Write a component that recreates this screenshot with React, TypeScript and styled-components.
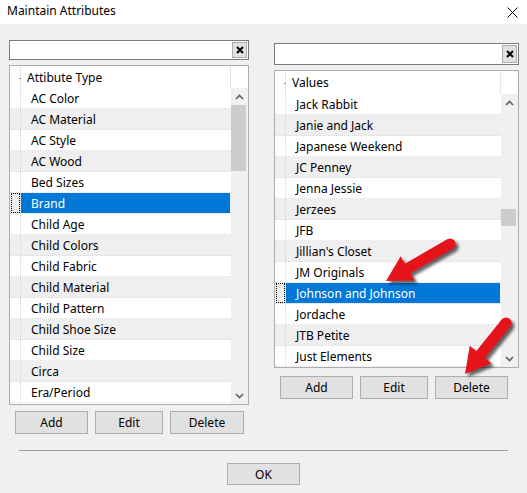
import React from "react";
import styled, { createGlobalStyle } from "styled-components";

const GlobalStyle = createGlobalStyle`
  html, body {
    margin: 0;
    padding: 0;
  }
  body {
    font-family: "Noto Sans", "Segoe UI", sans-serif;
    font-size: 12px;
    color: #000;
  }
`;

const Window = styled.div`
  position: relative;
  width: 527px;
  height: 493px;
  background: #f0f0f0;
  overflow: hidden;
  display: flex;
  flex-direction: column;
`;

const TitleBar = styled.div`
  height: 24px;
  flex-shrink: 0;
  background: #fff;
  display: flex;
  align-items: center;
  justify-content: space-between;
  padding: 0 9px 0 7px;
  box-sizing: border-box;
`;

const Title = styled.span`
  font-size: 12px;
  line-height: 1;
  margin-top: -3px;
`;

const Content = styled.div`
  display: flex;
  align-items: flex-start;
  padding-left: 9px;
`;

const Panel = styled.div<{ $top: number; $left: number; $width: number }>`
  display: flex;
  flex-direction: column;
  margin-top: ${(p) => p.$top}px;
  margin-left: ${(p) => p.$left}px;
  width: ${(p) => p.$width}px;
`;

const SearchBox = styled.div<{ $h: number }>`
  height: ${(p) => p.$h}px;
  box-sizing: border-box;
  border: 1px solid #7a7a7a;
  background: #fff;
  display: flex;
  justify-content: flex-end;
  padding: 1px;
`;

const ClearButton = styled.div`
  width: 15px;
  height: 100%;
  box-sizing: border-box;
  border: 1px solid #adadad;
  background: #e1e1e1;
  display: flex;
  align-items: center;
  justify-content: center;
`;

const ListBox = styled.div<{ $h: number }>`
  margin-top: 5px;
  height: ${(p) => p.$h}px;
  box-sizing: border-box;
  border: 1px solid #abadb3;
  background: #fff;
  display: flex;
  flex-direction: column;
  overflow: hidden;
`;

const Header = styled.div<{ $h: number }>`
  height: ${(p) => p.$h}px;
  flex-shrink: 0;
  display: flex;
`;

const HeaderGrip = styled.div`
  width: 10px;
  border-right: 1px solid #e5e5e5;
  position: relative;
  &::after {
    content: "";
    position: absolute;
    right: -1px;
    top: 12px;
    width: 2px;
    height: 1px;
    background: #8a8a8a;
  }
`;

const HeaderLabel = styled.div`
  flex: 1;
  padding-left: 6px;
  display: flex;
  align-items: center;
  border-right: 1px solid #e5e5e5;
  font-size: 12px;
`;

const HeaderCorner = styled.div`
  width: 17px;
`;

const ListBody = styled.div`
  flex: 1;
  display: flex;
  min-height: 0;
`;

const Rows = styled.div`
  flex: 1;
  overflow: hidden;
`;

const Row = styled.div<{ $alt: boolean }>`
  height: 21px;
  box-sizing: border-box;
  display: flex;
  background: ${(p) => (p.$alt ? "#efefef" : "#fff")};
  border-bottom: 1px dotted #dedede;
`;

const RowGrip = styled.div`
  width: 10px;
  flex-shrink: 0;
  border-right: 1px dotted #d6d6d6;
  position: relative;
`;

const FocusMark = styled.div`
  position: absolute;
  left: 1px;
  right: 0;
  top: 0;
  bottom: 0;
  border: 1px dotted #000;
`;

const Cell = styled.div<{ $selected: boolean }>`
  flex: 1;
  margin-right: 1px;
  padding-left: 10px;
  display: flex;
  align-items: center;
  white-space: nowrap;
  font-size: 12px;
  background: ${(p) => (p.$selected ? "#0078d7" : "transparent")};
  color: ${(p) => (p.$selected ? "#fff" : "#000")};
`;

const ScrollBar = styled.div`
  width: 17px;
  flex-shrink: 0;
  background: #f0f0f0;
  display: flex;
  flex-direction: column;
`;

const ScrollArrow = styled.div`
  height: 17px;
  flex-shrink: 0;
  display: flex;
  align-items: center;
  justify-content: center;
`;

const Track = styled.div`
  flex: 1;
`;

const Thumb = styled.div<{ $offset: number; $h: number }>`
  margin-top: ${(p) => p.$offset}px;
  height: ${(p) => p.$h}px;
  width: 15px;
  background: #cdcdcd;
`;

const ButtonRow = styled.div<{ $top: number }>`
  display: flex;
  gap: 7px;
  padding-left: 6px;
  margin-top: ${(p) => p.$top}px;
`;

const Button = styled.button<{ $w: number; $h?: number }>`
  width: ${(p) => p.$w}px;
  height: ${(p) => p.$h ?? 23}px;
  box-sizing: border-box;
  border: 1px solid #adadad;
  background: #e1e1e1;
  font-family: "Noto Sans", "Segoe UI", sans-serif;
  font-size: 12px;
  color: #000;
  padding: 0;
`;

const Separator = styled.div`
  margin: 16px 19px 0;
  height: 1px;
  background: #a0a0a0;
`;

const Footer = styled.div`
  display: flex;
  justify-content: center;
  margin-top: 12px;
`;

const Overlay = styled.svg`
  position: absolute;
  left: 0;
  top: 0;
  pointer-events: none;
`;

const Chevron = ({ up }: { up: boolean }) => (
  <svg width="9" height="6" viewBox="0 0 9 6">
    <path
      d={up ? "M1 5 L4.5 1.5 L8 5" : "M1 1 L4.5 4.5 L8 1"}
      fill="none"
      stroke="#606060"
      strokeWidth="1.6"
    />
  </svg>
);

const ClearIcon = () => (
  <svg width="8" height="8" viewBox="0 0 8 8">
    <path d="M1 1 L7 7 M7 1 L1 7" stroke="#000" strokeWidth="2" />
  </svg>
);

interface ListProps {
  title: string;
  items: string[];
  selected: number;
  height: number;
  headerHeight: number;
  thumbOffset: number;
  thumbHeight: number;
}

const AttrList = ({
  title,
  items,
  selected,
  height,
  headerHeight,
  thumbOffset,
  thumbHeight,
}: ListProps) => (
  <ListBox $h={height}>
    <Header $h={headerHeight}>
      <HeaderGrip />
      <HeaderLabel>{title}</HeaderLabel>
      <HeaderCorner />
    </Header>
    <ListBody>
      <Rows>
        {items.map((item, i) => (
          <Row key={item} $alt={i % 2 === 1}>
            <RowGrip>{i === selected && <FocusMark />}</RowGrip>
            <Cell $selected={i === selected}>{item}</Cell>
          </Row>
        ))}
      </Rows>
      <ScrollBar>
        <ScrollArrow>
          <Chevron up />
        </ScrollArrow>
        <Track>
          <Thumb $offset={thumbOffset} $h={thumbHeight} />
        </Track>
        <ScrollArrow>
          <Chevron up={false} />
        </ScrollArrow>
      </ScrollBar>
    </ListBody>
  </ListBox>
);

// callout arrow: tail (tx,ty) -> tip (px,py)
const RedArrow = ({ tx, ty, px, py }: { tx: number; ty: number; px: number; py: number }) => {
  const len = Math.hypot(px - tx, py - ty);
  const dx = (px - tx) / len;
  const dy = (py - ty) / len;
  const nx = -dy;
  const ny = dx;
  const s = 5.5;
  const head = 25;
  const wing = 14;
  const bx = px - dx * head;
  const by = py - dy * head;
  const pts = [
    [tx + nx * s, ty + ny * s],
    [bx + nx * s, by + ny * s],
    [bx + nx * wing, by + ny * wing],
    [px, py],
    [bx - nx * wing, by - ny * wing],
    [bx - nx * s, by - ny * s],
    [tx - nx * s, ty - ny * s],
  ]
    .map((p) => p.join(","))
    .join(" ");
  return (
    <g>
      <g transform="translate(3,3)" filter="url(#blur)" opacity="0.6">
        <polygon points={pts} fill="#000" />
        <circle cx={tx} cy={ty} r={s} fill="#000" />
      </g>
      <polygon points={pts} fill="#e5141b" />
      <circle cx={tx} cy={ty} r={s} fill="#e5141b" />
    </g>
  );
};

const attributeTypes = [
  "AC Color",
  "AC Material",
  "AC Style",
  "AC Wood",
  "Bed Sizes",
  "Brand",
  "Child Age",
  "Child Colors",
  "Child Fabric",
  "Child Material",
  "Child Pattern",
  "Child Shoe Size",
  "Child Size",
  "Circa",
  "Era/Period",
];

const values = [
  "Jack Rabbit",
  "Janie and Jack",
  "Japanese Weekend",
  "JC Penney",
  "Jenna Jessie",
  "Jerzees",
  "JFB",
  "Jillian's Closet",
  "JM Originals",
  "Johnson and Johnson",
  "Jordache",
  "JTB Petite",
  "Just Elements",
];

const App = () => {
  return (
    <>
      <GlobalStyle />
      <Window>
        <TitleBar>
          <Title>Maintain Attributes</Title>
          <svg width="11" height="11" viewBox="0 0 11 11">
            <path d="M0.5 0.5 L10.5 10.5 M10.5 0.5 L0.5 10.5" stroke="#000" strokeWidth="1" />
          </svg>
        </TitleBar>
        <Content>
          <Panel $top={16} $left={0} $width={240}>
            <SearchBox $h={20}>
              <ClearButton>
                <ClearIcon />
              </ClearButton>
            </SearchBox>
            <AttrList
              title="Attibute Type"
              items={attributeTypes}
              selected={5}
              height={340}
              headerHeight={22}
              thumbOffset={0}
              thumbHeight={66}
            />
            <ButtonRow $top={6}>
              <Button $w={73}>Add</Button>
              <Button $w={68}>Edit</Button>
              <Button $w={74}>Delete</Button>
            </ButtonRow>
          </Panel>
          <Panel $top={19} $left={25} $width={245}>
            <SearchBox $h={22}>
              <ClearButton>
                <ClearIcon />
              </ClearButton>
            </SearchBox>
            <AttrList
              title="Values"
              items={values}
              selected={9}
              height={298}
              headerHeight={23}
              thumbOffset={98}
              thumbHeight={17}
            />
            <ButtonRow $top={8}>
              <Button $w={73}>Add</Button>
              <Button $w={68}>Edit</Button>
              <Button $w={73}>Delete</Button>
            </ButtonRow>
          </Panel>
        </Content>
        <Separator />
        <Footer>
          <Button $w={73} $h={22}>
            OK
          </Button>
        </Footer>
        <Overlay width="527" height="493" viewBox="0 0 527 493">
          <defs>
            <filter id="blur" x="-20%" y="-20%" width="140%" height="140%">
              <feGaussianBlur stdDeviation="1.5" />
            </filter>
          </defs>
          <RedArrow tx={450} ty={244} px={386} py={281} />
          <RedArrow tx={506} ty={323} px={465} py={374} />
        </Overlay>
      </Window>
    </>
  );
};

export default App;
